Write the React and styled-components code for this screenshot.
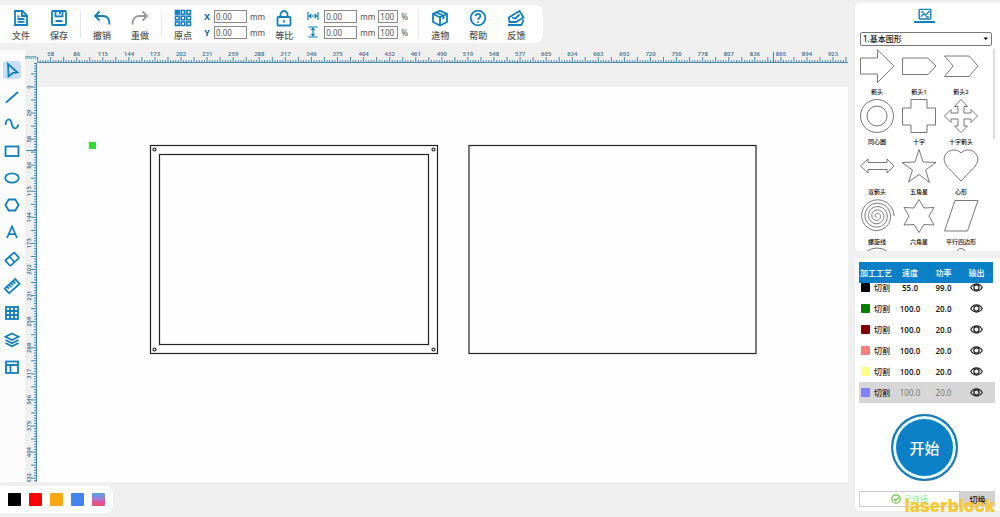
import React from 'react'
import styled, { createGlobalStyle, css } from 'styled-components'

const BLUE = '#1180bd'
const SANS = '"Noto Sans", "Noto Sans CJK SC", sans-serif'

const STEP = 26.08

const H_LABELS = [
  58, 86, 115, 144, 173, 202, 231, 259, 288, 317, 346, 375, 404, 432, 461, 490,
  519, 548, 577, 605, 634, 663, 692, 720, 750, 778, 807, 836, 865, 894, 923,
]

const V_LABELS = [0, 29, 58, 86, 115, 144, 173, 202, 231, 259, 288, 317, 346, 375, 404, 432]

// archimedean spiral for the shape library
const spiral = () => {
  const points = []
  const turns = 4.75
  for (let i = 0; i <= 240; i++) {
    const t = i / 240
    const angle = -(1 - t) * turns * Math.PI * 2
    const r = 1 + 16 * t
    points.push(`${(17 + r * Math.cos(angle)).toFixed(2)},${(17 + r * Math.sin(angle)).toFixed(2)}`)
  }
  return points.join(' ')
}

const SHAPES = [
  { name: '箭头', art: <path d="M.5 9h17V.8L34 17 17.500 33.500V25H.5z" /> },
  { name: '箭头1', art: <path d="M.5 9H26l8 8-8 8.500H.5z" /> },
  { name: '箭头2', art: <path d="M.5 7H25l9 10-9 10.500H.5L9 17z" /> },
  { name: '同心圆', art: <><circle cx="17" cy="17" r="16.500" /><circle cx="17" cy="17" r="10" /></> },
  { name: '十字', art: <path d="M9 .5h16V9h8.500v17H25v7.500H9V26H.5V9H9z" /> },
  { name: '十字箭头', art: <path d="M17 .5l6.500 7H20V14h7v-3.500l6.500 6.500-6.500 6.500V20h-7v7h3.500L17 33.500 10.500 27H14v-7H7v3.500L.5 17 7 10.500V14h7V7.500h-3.500z" /> },
  { name: '双箭头', art: <path d="M.5 17L8 10v3.500h19V10l7 7-7 7v-3.500H8V24z" /> },
  { name: '五角星', art: <path d="M17 .5l4 12.500 13 .5-10.500 7.500 4 12.500L17 25.500 6.500 33 10.500 21 0 13.500 13 13z" /> },
  { name: '心形', art: <path d="M17 4C21-.5 29 0 32.500 5.500c3 5 .5 9.500-2.500 13L17 32 4 18.500C1 15-1.500 10.500 1.500 5.500 5 0 13-.5 17 4z" /> },
  { name: '螺旋线', art: <polyline points={spiral()} /> },
  { name: '六角星', art: <path d="M17 .5l5 8.500 10-.5-5 8.500 5 9-10-.5-5 8-5-8-10 .5 5-9-5-8.500 10 .5z" /> },
  { name: '平行四边形', art: <path d="M11 1.500h23L23.500 32H.5z" /> },
  { name: '', art: <ellipse cx="17" cy="10" rx="14" ry="11" /> },
  { name: '', art: <path d="M6 12h22l5 14H1z" /> },
  { name: '', art: <circle cx="17" cy="4" r="4.500" /> },
]

const LAYERS = [
  { color: '#000000', speed: '55.0', power: '99.0' },
  { color: '#008000', speed: '100.0', power: '20.0' },
  { color: '#800000', speed: '100.0', power: '20.0' },
  { color: '#f58080', speed: '100.0', power: '20.0' },
  { color: '#ffff80', speed: '100.0', power: '20.0' },
  { color: '#8080ff', speed: '100.0', power: '20.0', active: true },
]

const PALETTE = [
  { name: 'black', fill: '#000' },
  { name: 'red', fill: '#fb0007' },
  { name: 'orange', fill: '#f9a814' },
  { name: 'blue', fill: '#4583f0' },
  { name: 'gradient', fill: 'linear-gradient(#50a4e4 0%, #a57bd8 48%, #e2559d 65%, #e8566b 100%)' },
]

const ICONS = {
  file: <><path d="M3 2h7.500L15 6.500V16H3z" /><path d="M10 2.500V7h5M5.500 7.500h2M5.500 10h7M5.500 12.800h7" /></>,
  save: <><rect x="2" y="2" width="14" height="14" rx="1" /><path d="M5.500 2.500v4.800h7V2.500M9.800 3v2.200M5.500 12h7" /></>,
  undo: <path d="M6.500 2.500L2 7l4.500 4.500M2.500 7H10c4 0 6.500 3 6.500 8.500" />,
  redo: <path d="M11.500 2.500L16 7l-4.500 4.500M15.500 7H8c-4 0-6.500 3-6.500 8.500" />,
  lock: <><rect x="2.500" y="8" width="13" height="8.500" rx="1" /><path d="M5.500 8V5.500a3.500 3.500 0 0 1 7 0V8M9 11.300v2.200" /></>,
  cube: <><path d="M9 1.800l7 3V13l-7 3.500L2 13V4.800z" /><path d="M2 5l7 3.300L16 5M9 8.300v8M5.500 3.400l7 3.300v3.500" /></>,
  help: <><circle cx="9" cy="9" r="7.300" /><path d="M6.700 7.200c0-3 4.600-3 4.600 0 0 1.700-2.300 1.800-2.300 3.600M9 12.300v1.500" /></>,
  feedback: <><path d="M1 16h14M2.500 13L1.800 8.500 12.500 2l4 6.500-7.500 4.500z" /><path d="M5 8.500l3.500 1L12.500 5.500M14.500 16l2-5.500" /></>,
  pointer: <path d="M5 3l9.500 8.500-5 .7L5.500 15.500z" />,
  line: <path d="M3 14.500L15 4" />,
  curve: <path d="M2.500 10C3 3.500 7.500 2.500 8.500 8s4.500 8 7 1.500" />,
  rect: <rect x="2.500" y="4.500" width="13" height="9.500" />,
  ellipse: <ellipse cx="9" cy="9" rx="6.800" ry="4.700" />,
  hexagon: <path d="M5.700 3.500h6.600L15.600 9l-3.300 5.500H5.700L2.400 9z" />,
  text: <path d="M4 15L9 3.500 14 15M6 11.200h6" />,
  eraser: <><rect x="3" y="5.500" width="12" height="7.500" rx="1" transform="rotate(-42 9 9)" /><path d="M6.300 6.500l5.200 5.500" /></>,
  ruler: <g transform="rotate(-42 9 9)"><rect x="2" y="6" width="14" height="6.500" /><path d="M5 6.500v2.500M7.700 6.500v3M10.400 6.500v2.500M13 6.500v3" /></g>,
  grid: <><rect x="3" y="3" width="12" height="12" /><path d="M7 3v12M11 3v12M3 7h12M3 11h12" /></>,
  layers: <path d="M9 2.500l6.500 3.200L9 9 2.500 5.700zM2.500 9L9 12.200 15.500 9M2.500 12L9 15.300l6.500-3.300" />,
  layout: <><rect x="3" y="3.500" width="12" height="11.500" /><path d="M3 7h12M7.500 7v8" /></>,
  chart: <><rect x="1.500" y="3" width="15" height="12.500" rx="1" /><path d="M4 12.500l3.500-4 2 2L15 5M4 6.500h3M10 12.800h4" /></>,
  eye: <><path d="M1 9c4-6.500 12-6.500 16 0-4 6.500-12 6.500-16 0z" /><circle cx="9" cy="9" r="3.600" /></>,
  check: <><circle cx="9" cy="9" r="7.500" /><path d="M5 9l3 3 6-6" /></>,
  width: <path d="M1.500 3v12M16.500 3v12M3.500 9h11M6.500 6l-3 3 3 3M11.500 6l3 3-3 3" />,
  height: <path d="M2 1.500h14M2 16.500h14M9 3.500v11M6.500 6L9 3.500 11.500 6M6.500 12L9 14.500l2.500-2.500" />,
}

const TOOLS = ['pointer', 'line', 'curve', 'rect', 'ellipse', 'hexagon', 'text', 'eraser', 'ruler', 'grid', 'layers', 'layout']

const Icon = ({ name, size = 18, weight = 1.8 }) => (
  <svg width={size} height={size} viewBox="0 0 18 18" fill="none" stroke="currentColor" strokeWidth={weight} aria-hidden="true">
    {ICONS[name]}
  </svg>
)

const OriginIcon = () => (
  <svg width="18" height="18" viewBox="0 0 18 18" fill="none" stroke="currentColor" strokeWidth="1.600" aria-hidden="true">
    {[0, 1, 2].map((row) => [0, 1, 2].map((col) => (
      <rect key={`${row}${col}`} x={1.5 + col * 5.7} y={1.5 + row * 5.7} width="3.600" height="3.600" fill={row + col === 0 ? 'currentColor' : 'none'} />
    )))}
  </svg>
)

const Tool = ({ icon, label, muted }) => (
  <ToolButton type="button" $muted={muted}>
    {icon === 'origin' ? <OriginIcon /> : <Icon name={icon} />}
    <span>{label}</span>
  </ToolButton>
)

const HorizontalRuler = () => (
  <RulerSvg>
    {H_LABELS.map((n, i) => (
      <text key={n} x={13.7 + i * STEP} y="5.800" textAnchor="middle">{n}</text>
    ))}
    {Array.from({ length: 311 }, (_, i) => (
      <path key={i} d={`M${(0.6 + i * STEP / 10).toFixed(2)} 13v-${i % 5 === 0 ? 6 : 3}`} />
    ))}
    <path d="M736.500 13V2" />
    <path d="M0 12.500h2000" />
  </RulerSvg>
)

const VerticalRuler = () => (
  <RulerSvg>
    {V_LABELS.map((n, i) => (
      <text key={n} transform={`translate(5.800 ${24 + i * STEP}) rotate(-90)`} textAnchor="middle">{n}</text>
    ))}
    {Array.from({ length: 162 }, (_, i) => (
      <path key={i} d={`M12 ${(0.5 + i * STEP / 10).toFixed(2)}h-${i % 5 === 4 ? 6 : 3}`} />
    ))}
    <path d="M1 87.500h11" />
    <path d="M11.500 0v2000" />
  </RulerSvg>
)

const Drawing = () => (
  <DrawingSvg>
    <rect y="24" width="100%" height="100%" fill="#fefefe" />
    <rect x="52" y="79" width="7" height="7" fill="#2fdc34" />
    <g fill="none" stroke="#222" strokeWidth="1.200">
      <rect x="113.500" y="82.500" width="287" height="208" />
      <rect x="122.500" y="91.500" width="269" height="190" />
      <rect x="432" y="82.500" width="287" height="208" />
      {[[117.5, 86.5], [396.5, 86.5], [117.5, 286.5], [396.5, 286.5]].map(([x, y]) => (
        <circle key={`${x}-${y}`} cx={x} cy={y} r="1.500" />
      ))}
    </g>
  </DrawingSvg>
)

const App = () => (
  <>
    <GlobalStyle />
    <Page>
      <Workspace>
        <Toolbar>
          <Tool icon="file" label="文件" />
          <Tool icon="save" label="保存" />
          <Divider />
          <Tool icon="undo" label="撤销" />
          <Tool icon="redo" label="重做" muted />
          <Divider />
          <Tool icon="origin" label="原点" />
          <Fields>
            <Field><Axis htmlFor="pos-x">X</Axis><NumberBox id="pos-x" defaultValue="0.00" /><Unit>mm</Unit></Field>
            <Field><Axis htmlFor="pos-y">Y</Axis><NumberBox id="pos-y" defaultValue="0.00" /><Unit>mm</Unit></Field>
          </Fields>
          <Tool icon="lock" label="等比" />
          <Fields>
            {['width', 'height'].map((dim) => (
              <Field key={dim}>
                <SizeLabel htmlFor={dim} aria-label={dim}><Icon name={dim} size={12} /></SizeLabel>
                <NumberBox id={dim} defaultValue="0.00" />
                <Unit>mm</Unit>
                <NumberBox $small aria-label={`${dim} percent`} defaultValue="100" />
                <Unit>%</Unit>
              </Field>
            ))}
          </Fields>
          <Divider />
          <Tool icon="cube" label="造物" />
          <Tool icon="help" label="帮助" />
          <Tool icon="feedback" label="反馈" />
        </Toolbar>

        <Main>
          <Sidebar>
            {TOOLS.map((tool) => (
              <SideButton key={tool} type="button" aria-label={tool} $active={tool === 'pointer'}>
                <Icon name={tool} />
              </SideButton>
            ))}
          </Sidebar>
          <Stage>
            <Corner>mm</Corner>
            <HorizontalRuler />
            <VerticalRuler />
            <Drawing />
          </Stage>
        </Main>

        <Palette>
          {PALETTE.map((c) => <Swatch key={c.name} type="button" aria-label={c.name} $fill={c.fill} />)}
        </Palette>
      </Workspace>

      <Aside>
        <LibraryPanel>
          <Tab type="button" aria-label="shapes"><Icon name="chart" size={14} /></Tab>
          <SelectWrap>
            <Select aria-label="category" defaultValue="basic">
              <option value="basic">1.基本图形</option>
            </Select>
            <svg width="6" height="4" viewBox="0 0 6 4" aria-hidden="true"><path d="M.5 .5h4.500L2.800 3z" /></svg>
          </SelectWrap>
          <ShapeScroll>
            <ShapeGrid>
              {SHAPES.map((shape, i) => (
                <ShapeButton key={i} type="button">
                  <svg width="34" height="34" viewBox="0 0 34 34" fill="none" stroke="#555" strokeWidth=".8" overflow="visible">{shape.art}</svg>
                  <span>{shape.name}</span>
                </ShapeButton>
              ))}
            </ShapeGrid>
            <ScrollThumb />
          </ShapeScroll>
        </LibraryPanel>

        <ProcessPanel>
          <LayerTable>
            <thead>
              <tr><th>加工工艺</th><th>速度</th><th>功率</th><th>输出</th></tr>
            </thead>
            <tbody>
              {LAYERS.map((layer) => (
                <LayerRow key={layer.color} $active={layer.active}>
                  <td><Chip $fill={layer.color} />切割</td>
                  <td>{layer.speed}</td>
                  <td>{layer.power}</td>
                  <td><EyeButton type="button" aria-label="output"><Icon name="eye" size={13} weight={1.7} /></EyeButton></td>
                </LayerRow>
              ))}
            </tbody>
          </LayerTable>
          <StartButton type="button">开始</StartButton>
          <StatusBar>
            <Status><Icon name="check" size={10} weight={2} />已连接</Status>
            <SwitchButton type="button">切换</SwitchButton>
          </StatusBar>
        </ProcessPanel>
      </Aside>
      <Watermark>laserblock</Watermark>
    </Page>
  </>
)

const GlobalStyle = createGlobalStyle`
  * {
    box-sizing: border-box;
  }
  body {
    margin: 0;
    background: #efefef;
    font-family: ${SANS};
  }
  button, input, select {
    margin: 0;
    padding: 0;
    border: 0;
    background: none;
    color: inherit;
    font-family: inherit;
  }
  svg {
    display: block;
    flex-shrink: 0;
  }
`

const Page = styled.div`
  position: relative;
  display: flex;
  gap: 7px;
  height: 100vh;
  min-height: 500px;
  overflow: hidden;
`

const Workspace = styled.div`
  flex: 1;
  min-width: 0;
  display: flex;
  flex-direction: column;
  align-items: flex-start;
  padding: 5px 0 4px;
`

const Toolbar = styled.header`
  display: flex;
  align-items: center;
  height: 38px;
  padding: 0 8px 0 2px;
  background: #fff;
  border-radius: 0 8px 8px 0;
`

const ToolButton = styled.button`
  width: 38px;
  display: flex;
  flex-direction: column;
  align-items: center;
  gap: 3px;
  padding-top: 2px;
  color: ${(p) => (p.$muted ? '#999' : BLUE)};

  span {
    font-size: 9px;
    line-height: 12px;
    font-weight: 500;
    color: #555;
  }
`

const Divider = styled.div`
  width: 1px;
  height: 27px;
  margin: 0 2px;
  background: #e8e8e8;

  ${Toolbar} > div + & {
    margin-left: 9px;
  }
`

const Fields = styled.div`
  display: flex;
  flex-direction: column;
  gap: 3px;
`

const Field = styled.div`
  display: flex;
  align-items: center;
  gap: 3px;
  padding-left: 1px;
`

const Axis = styled.label`
  width: 8px;
  font-size: 9px;
  line-height: 13px;
  font-weight: 700;
  text-align: center;
  color: #14699b;
`

const SizeLabel = styled.label`
  width: 17px;
  display: flex;
  justify-content: center;
  color: ${BLUE};
`

const NumberBox = styled.input`
  width: ${(p) => (p.$small ? 20 : 33)}px;
  height: 13px;
  border: 1px solid #8a8a8a;
  padding: 0 1px;
  font-size: 8px;
  line-height: 11px;
  color: #555;
`

const Unit = styled.span`
  min-width: 8px;
  font-size: 8px;
  line-height: 13px;
  font-weight: 500;
  color: #666;
`

const Main = styled.main`
  flex: 1;
  min-height: 0;
  width: 100%;
  display: flex;
  margin: 7px 0 4px;
`

const Sidebar = styled.nav`
  width: 25px;
  display: flex;
  flex-direction: column;
  gap: 9px;
  padding: 11px 3px 0;
  background: #fcfcfc;
  overflow: hidden;
`

const SideButton = styled.button`
  width: 18px;
  height: 18px;
  flex-shrink: 0;
  border-radius: 3px;
  color: ${BLUE};
  background: ${(p) => (p.$active ? '#c9e0f2' : 'transparent')};
`

const Stage = styled.div`
  flex: 1;
  min-width: 0;
  display: grid;
  grid-template-columns: 12px minmax(0, 1fr);
  grid-template-rows: 13px minmax(0, 1fr);
`

const Corner = styled.div`
  font-size: 6px;
  line-height: 15px;
  color: #3f6f8e;
  font-weight: 500;
`

const RulerSvg = styled.svg`
  width: 100%;
  height: 100%;
  overflow: hidden;

  path {
    stroke: #4889ac;
    stroke-width: 1;
  }
  text {
    font-size: 6px;
    font-weight: 600;
    fill: #4c7690;
  }
`

const DrawingSvg = styled.svg`
  width: 100%;
  height: 100%;
`

const Palette = styled.div`
  display: flex;
  align-items: center;
  gap: 8px;
  height: 27px;
  padding: 0 8px;
  background: #fff;
  border-radius: 0 8px 8px 0;
`

const Swatch = styled.button`
  width: 13px;
  height: 13px;
  border-radius: 1px;
  background: ${(p) => p.$fill};
`

const Aside = styled.aside`
  width: 145px;
  display: flex;
  flex-direction: column;
  gap: 7px;
  padding: 3px 0 6px;
`

const panel = css`
  background: #fff;
  border-radius: 5px 0 0 5px;
`

const LibraryPanel = styled.section`
  ${panel}
  flex: 1;
  min-height: 0;
  display: flex;
  flex-direction: column;
  padding: 4px 5px 0;
  overflow: hidden;
`

const Tab = styled.button`
  align-self: center;
  flex-shrink: 0;
  width: 21px;
  height: 16px;
  display: flex;
  justify-content: center;
  margin-right: 6px;
  border-bottom: 2px solid ${BLUE};
  color: ${BLUE};
`

const SelectWrap = styled.div`
  position: relative;
  flex-shrink: 0;
  margin: 9px 3px 3px 0;

  svg {
    position: absolute;
    right: 3px;
    top: 5px;
    pointer-events: none;
  }
`

const Select = styled.select`
  appearance: none;
  display: block;
  width: 100%;
  height: 14px;
  padding: 0 2px;
  border: 1px solid #777;
  border-radius: 2px;
  font-size: 8px;
  line-height: 12px;
  font-weight: 500;
  color: #111;
`

const ShapeScroll = styled.div`
  flex: 1;
  min-height: 0;
  display: flex;
  justify-content: space-between;
  overflow: hidden;
`

const ShapeGrid = styled.div`
  display: grid;
  grid-template-columns: repeat(3, 34px);
  grid-auto-rows: 48px;
  gap: 2px 8px;
`

const ShapeButton = styled.button`
  display: flex;
  flex-direction: column;
  align-items: center;

  span {
    margin-top: 5px;
    font-size: 6px;
    line-height: 9px;
    font-weight: 500;
    white-space: nowrap;
    color: #111;
  }
`

const ScrollThumb = styled.div`
  width: 2px;
  height: 90px;
  background: #dcdcdc;
`

const ProcessPanel = styled.section`
  ${panel}
  display: flex;
  flex-direction: column;
  padding: 4px;
`

const LayerTable = styled.table`
  display: block;
  margin-right: 1px;
  font-size: 8px;
  line-height: 12px;

  thead, tbody {
    display: block;
  }
  thead {
    position: relative;
    margin: 0 2px -6px 0;
    background: #0c80c6;
    color: #fff;
  }
  tr {
    display: grid;
    grid-template-columns: 34px 34px 33px 33px;
    align-items: center;
    height: 21px;
  }
  th, td {
    padding: 0;
    font-weight: 500;
    text-align: center;
    white-space: nowrap;
  }
`

const LayerRow = styled.tr`
  background: ${(p) => (p.$active ? '#d6d6d6' : 'transparent')};

  td {
    display: flex;
    align-items: center;
    justify-content: center;
    font-weight: ${(p) => (p.$active ? 400 : 600)};
    color: ${(p) => (p.$active ? '#777' : '#222')};
  }
  td:first-child {
    justify-content: flex-start;
    gap: 4px;
    padding-left: 2px;
    font-weight: 500;
    color: #222;
  }
`

const Chip = styled.span`
  width: 9px;
  height: 9px;
  border-radius: 1px;
  background: ${(p) => p.$fill};
`

const EyeButton = styled.button`
  color: #222;
`

const StartButton = styled.button`
  align-self: center;
  width: 67px;
  height: 67px;
  margin: 11px 6px 10px 0;
  border: 2px solid #1c79b4;
  border-radius: 50%;
  background: #0c80c6;
  box-shadow: inset 0 0 0 3px #e6fbff;
  font-size: 15px;
  font-weight: 500;
  color: #fff;
`

const StatusBar = styled.div`
  display: flex;
  height: 16px;
  margin-right: 1px;
`

const Status = styled.div`
  flex: 1;
  display: flex;
  align-items: center;
  justify-content: center;
  gap: 3px;
  border: 1px solid #ccc;
  font-size: 8px;
  line-height: 14px;
  color: #7ff08f;

  svg {
    color: #5dc02c;
  }
`

const SwitchButton = styled.button`
  width: 35px;
  background: #d2d2d2;
  font-size: 8px;
  font-weight: 500;
  color: #111;
`

const Watermark = styled.div`
  position: absolute;
  right: 5px;
  bottom: 2px;
  font-family: Inter, sans-serif;
  font-size: 17px;
  line-height: 18px;
  font-weight: 900;
  color: #f8c73c;
  pointer-events: none;
`

export default App
